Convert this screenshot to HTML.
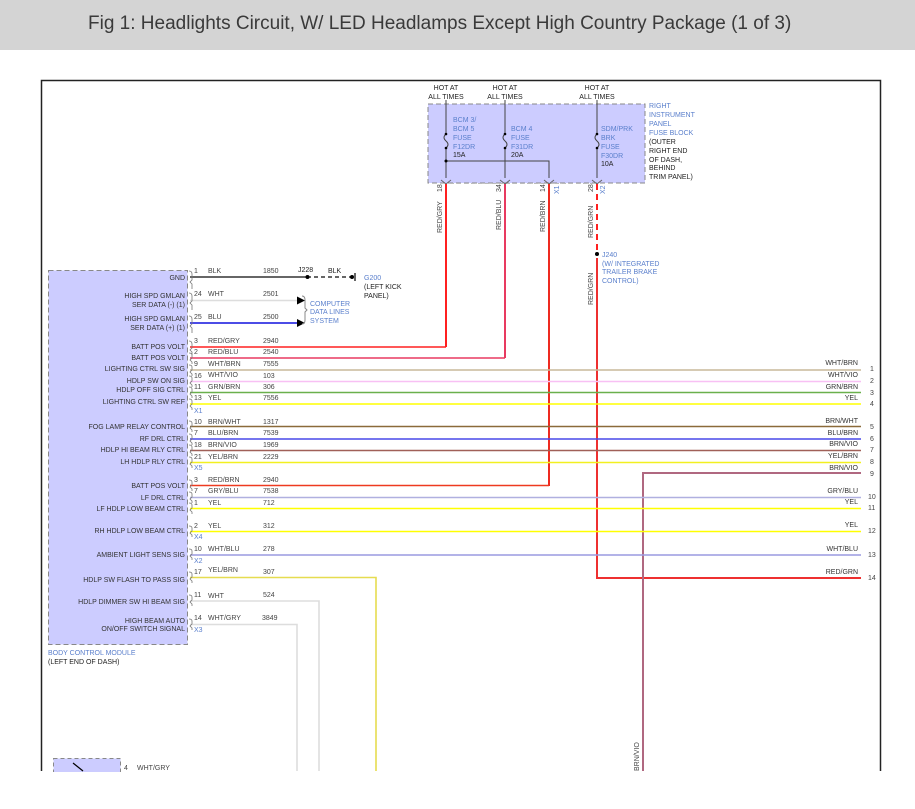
<!DOCTYPE html>
<html><head><meta charset="utf-8"><style>
html,body{margin:0;padding:0;background:#fff;width:915px;height:809px;overflow:hidden}
svg{display:block}
text{font-family:"Liberation Sans",Arial,sans-serif;font-size:7px;fill:#444}
.l{text-anchor:end;fill:#333}
.b{fill:#5a7fcc}
.k{fill:#222}
</style></head><body>
<svg width="915" height="809" viewBox="0 0 915 809" xmlns="http://www.w3.org/2000/svg">
<rect x="0" y="0" width="915" height="50" fill="#d4d4d4"/>
<text x="88" y="29" style="font-size:19px;fill:#3a3a3a">Fig 1: Headlights Circuit, W/ LED Headlamps Except High Country Package (1 of 3)</text>

<path d="M41.5 771V80.5H880.5V771" fill="none" stroke="#222" stroke-width="1.5"/>

<rect x="428" y="104" width="217" height="79" fill="#ccccff" stroke="#888" stroke-dasharray="5,3"/>
<g text-anchor="middle">
<text x="446" y="90" class="k">HOT AT</text><text x="446" y="99" class="k">ALL TIMES</text>
<text x="505" y="90" class="k">HOT AT</text><text x="505" y="99" class="k">ALL TIMES</text>
<text x="597" y="90" class="k">HOT AT</text><text x="597" y="99" class="k">ALL TIMES</text>
</g>
<g stroke="#444" fill="none" stroke-width="1">
<path d="M446 100V134M446 148V178"/><path d="M446 134q-4 3.5 0 7q4 3.5 0 7"/>
<path d="M505 100V134M505 148V178"/><path d="M505 134q-4 3.5 0 7q4 3.5 0 7"/>
<path d="M597 100V134M597 148V178"/><path d="M597 134q-4 3.5 0 7q4 3.5 0 7"/>
<path d="M446 161H549V178"/>
</g>
<g fill="#000"><circle cx="446" cy="134" r="1.3"/><circle cx="446" cy="148" r="1.3"/><circle cx="505" cy="134" r="1.3"/><circle cx="505" cy="148" r="1.3"/><circle cx="597" cy="134" r="1.3"/><circle cx="597" cy="148" r="1.3"/><circle cx="446" cy="161" r="1.5"/></g>
<text x="453" y="122" class="b">BCM 3/</text><text x="453" y="131" class="b">BCM 5</text><text x="453" y="140" class="b">FUSE</text><text x="453" y="149" class="b">F12DR</text><text x="453" y="157" class="k">15A</text>
<text x="511" y="131" class="b">BCM 4</text><text x="511" y="140" class="b">FUSE</text><text x="511" y="149" class="b">F31DR</text><text x="511" y="157" class="k">20A</text>
<text x="601" y="131" class="b">SDM/PRK</text><text x="601" y="140" class="b">BRK</text><text x="601" y="149" class="b">FUSE</text><text x="601" y="158" class="b">F30DR</text><text x="601" y="166" class="k">10A</text>
<text x="649" y="108" class="b">RIGHT</text><text x="649" y="117" class="b">INSTRUMENT</text><text x="649" y="126" class="b">PANEL</text><text x="649" y="135" class="b">FUSE BLOCK</text>
<text x="649" y="144" class="k">(OUTER</text><text x="649" y="153" class="k">RIGHT END</text><text x="649" y="162" class="k">OF DASH,</text><text x="649" y="170" class="k">BEHIND</text><text x="649" y="179" class="k">TRIM PANEL)</text>
<path d="M450 183.5H593" stroke="#bbb" stroke-dasharray="4,3"/>
<g stroke="#666" fill="none"><path d="M441 180l5 4l5-4M500 180l5 4l5-4M544 180l5 4l5-4M592 180l5 4l5-4"/></g>
<g transform="rotate(-90)">
<text x="-192" y="442">18</text><text x="-192" y="501">34</text><text x="-192" y="545">14</text><text x="-192" y="593">28</text>
<text x="-194" y="559" class="b">X1</text><text x="-194" y="605" class="b">X2</text>
<text x="-233" y="442">RED/GRY</text><text x="-230" y="501">RED/BLU</text><text x="-232" y="545">RED/BRN</text><text x="-238" y="593">RED/GRN</text>
<text x="-305" y="593">RED/GRN</text>
<text x="-771" y="639">BRN/VIO</text>
</g>

<g fill="none" stroke-width="2">
<path d="M446 184V347" stroke="#ff2020"/>
<path d="M505 184V358" stroke="#e83a60"/>
<path d="M549 184V486" stroke="#ee2a20"/>
<path d="M597 184V252" stroke="#ff2020" stroke-dasharray="6,4"/>
<path d="M597 258V578H861" stroke="#ee3030"/>
<path d="M643 771V473H861" stroke="#b06880"/>
</g>
<circle cx="597" cy="254" r="2" fill="#000"/>
<text x="602" y="257" class="b">J240</text><text x="602" y="266" class="b">(W/ INTEGRATED</text><text x="602" y="274" class="b">TRAILER BRAKE</text><text x="602" y="283" class="b">CONTROL)</text>

<rect x="48.5" y="270.5" width="139" height="374" fill="#ccccff" stroke="#888" stroke-dasharray="5,3"/>
<text x="48" y="655" class="b">BODY CONTROL MODULE</text>
<text x="48" y="664" class="k">(LEFT END OF DASH)</text>

<g fill="none" stroke-width="1.6">
<path d="M190 277H307" stroke="#333"/>
<path d="M307 277H352" stroke="#333" stroke-dasharray="4,3"/>
<path d="M190 300.5H297" stroke="#ddd"/>
<path d="M190 323H297" stroke="#1010dd"/>
<path d="M190 347H446" stroke="#ff2020"/>
<path d="M190 358H505" stroke="#e83a60"/>
<path d="M190 370H861" stroke="#c9b99a"/>
<path d="M190 381.5H861" stroke="#f8c0f4"/>
<path d="M190 392.5H861" stroke="#6ab04c"/>
<path d="M190 404H861" stroke="#ffff00"/>
<path d="M190 426.5H861" stroke="#8b6a3a"/>
<path d="M190 439H861" stroke="#4848e8"/>
<path d="M190 450.5H861" stroke="#a06058"/>
<path d="M190 462.5H861" stroke="#f2f020"/>
<path d="M190 485.5H549" stroke="#ee3a20"/>
<path d="M190 497.5H861" stroke="#b0b0e0"/>
<path d="M190 508.5H861" stroke="#ffff00"/>
<path d="M190 531.5H861" stroke="#ffff00"/>
<path d="M190 555H861" stroke="#9a9ae0"/>
<path d="M190 577.5H376V771" stroke="#e6dc50"/>
<path d="M190 601H319V771" stroke="#ddd"/>
<path d="M190 624.5H297V771" stroke="#ddd"/>
</g>
<circle cx="307.5" cy="277" r="2" fill="#000"/>
<circle cx="352" cy="277" r="2" fill="#000"/>
<path d="M355 273V281" stroke="#000" stroke-width="1.2"/>
<path d="M297 296.5l8 4l-8 4zM297 319l8 4l-8 4z" fill="#000"/>
<path d="M302 296q3 0 3 4v8l2 2l-2 2v8q0 4-3 4" fill="none" stroke="#888"/>
<text x="310" y="306" class="b">COMPUTER</text><text x="310" y="314" class="b">DATA LINES</text><text x="310" y="323" class="b">SYSTEM</text>
<text x="298" y="272" class="k">J228</text><text x="328" y="273" class="k">BLK</text>
<text x="364" y="280" class="b">G200</text><text x="364" y="289" class="k">(LEFT KICK</text><text x="364" y="298" class="k">PANEL)</text>

<g fill="none" stroke="#777" stroke-width="0.8">
<path d="M189 271q3 0 3 3v6l-2 2 2 2v5"/>
<path d="M189 293q3 0 3 3v5l-2 2 2 2v5"/>
<path d="M189 316q3 0 3 3v5l-2 2 2 2v5"/>
<path d="M189 341q3 0 3 3v4l-2 2 2 2v3"/><path d="M189 353q3 0 3 2v3l-2 2 2 2v2"/>
<path d="M189 365q3 0 3 2v3l-2 2 2 2v2"/><path d="M189 376q3 0 3 2v3l-2 2 2 2v2"/>
<path d="M189 387q3 0 3 2v3l-2 2 2 2v2"/><path d="M189 399q3 0 3 2v3l-2 2 2 2v2"/>
<path d="M189 421q3 0 3 2v3l-2 2 2 2v2"/><path d="M189 434q3 0 3 2v3l-2 2 2 2v2"/>
<path d="M189 445q3 0 3 2v3l-2 2 2 2v2"/><path d="M189 457q3 0 3 2v3l-2 2 2 2v2"/>
<path d="M189 480q3 0 3 2v3l-2 2 2 2v2"/><path d="M189 492q3 0 3 2v3l-2 2 2 2v2"/>
<path d="M189 503q3 0 3 2v3l-2 2 2 2v2"/><path d="M189 526q3 0 3 2v3l-2 2 2 2v2"/>
<path d="M189 549q3 0 3 2v3l-2 2 2 2v2"/><path d="M189 572q3 0 3 2v3l-2 2 2 2v2"/>
<path d="M189 595q3 0 3 2v3l-2 2 2 2v2"/><path d="M189 619q3 0 3 2v3l-2 2 2 2v2"/>
</g>

<g>
<text x="185" y="280" class="l">GND</text>
<text x="185" y="298" class="l">HIGH SPD GMLAN</text><text x="185" y="307" class="l">SER DATA (-) (1)</text>
<text x="185" y="321" class="l">HIGH SPD GMLAN</text><text x="185" y="330" class="l">SER DATA (+) (1)</text>
<text x="185" y="349" class="l">BATT POS VOLT</text>
<text x="185" y="360" class="l">BATT POS VOLT</text>
<text x="185" y="371" class="l">LIGHTING CTRL SW SIG</text>
<text x="185" y="383" class="l">HDLP SW ON SIG</text>
<text x="185" y="392" class="l">HDLP OFF SIG CTRL</text>
<text x="185" y="404" class="l">LIGHTING CTRL SW REF</text>
<text x="185" y="429" class="l">FOG LAMP RELAY CONTROL</text>
<text x="185" y="441" class="l">RF DRL CTRL</text>
<text x="185" y="452" class="l">HDLP HI BEAM RLY CTRL</text>
<text x="185" y="464" class="l">LH HDLP RLY CTRL</text>
<text x="185" y="488" class="l">BATT POS VOLT</text>
<text x="185" y="500" class="l">LF DRL CTRL</text>
<text x="185" y="511" class="l">LF HDLP LOW BEAM CTRL</text>
<text x="185" y="533" class="l">RH HDLP LOW BEAM CTRL</text>
<text x="185" y="557" class="l">AMBIENT LIGHT SENS SIG</text>
<text x="185" y="582" class="l">HDLP SW FLASH TO PASS SIG</text>
<text x="185" y="604" class="l">HDLP DIMMER SW HI BEAM SIG</text>
<text x="185" y="623" class="l">HIGH BEAM AUTO</text><text x="185" y="631" class="l">ON/OFF SWITCH SIGNAL</text>
</g>

<g>
<text x="194" y="273">1</text><text x="208" y="273">BLK</text><text x="263" y="273">1850</text>
<text x="194" y="296">24</text><text x="208" y="296">WHT</text><text x="263" y="296">2501</text>
<text x="194" y="319">25</text><text x="208" y="319">BLU</text><text x="263" y="319">2500</text>
<text x="194" y="343">3</text><text x="208" y="343">RED/GRY</text><text x="263" y="343">2940</text>
<text x="194" y="354">2</text><text x="208" y="354">RED/BLU</text><text x="263" y="354">2540</text>
<text x="194" y="366">9</text><text x="208" y="366">WHT/BRN</text><text x="263" y="366">7555</text>
<text x="194" y="378">16</text><text x="208" y="377">WHT/VIO</text><text x="263" y="378">103</text>
<text x="194" y="389">11</text><text x="208" y="389">GRN/BRN</text><text x="263" y="389">306</text>
<text x="194" y="400">13</text><text x="208" y="400">YEL</text><text x="263" y="400">7556</text>
<text x="194" y="413" class="b">X1</text>
<text x="194" y="424">10</text><text x="208" y="424">BRN/WHT</text><text x="263" y="424">1317</text>
<text x="194" y="435">7</text><text x="208" y="435">BLU/BRN</text><text x="263" y="435">7539</text>
<text x="194" y="447">18</text><text x="208" y="447">BRN/VIO</text><text x="263" y="447">1969</text>
<text x="194" y="459">21</text><text x="208" y="459">YEL/BRN</text><text x="263" y="459">2229</text>
<text x="194" y="470" class="b">X5</text>
<text x="194" y="482">3</text><text x="208" y="482">RED/BRN</text><text x="263" y="482">2940</text>
<text x="194" y="493">7</text><text x="208" y="493">GRY/BLU</text><text x="263" y="493">7538</text>
<text x="194" y="505">1</text><text x="208" y="505">YEL</text><text x="263" y="505">712</text>
<text x="194" y="528">2</text><text x="208" y="528">YEL</text><text x="263" y="528">312</text>
<text x="194" y="539" class="b">X4</text>
<text x="194" y="551">10</text><text x="208" y="551">WHT/BLU</text><text x="263" y="551">278</text>
<text x="194" y="563" class="b">X2</text>
<text x="194" y="574">17</text><text x="208" y="572">YEL/BRN</text><text x="263" y="574">307</text>
<text x="194" y="597">11</text><text x="208" y="598">WHT</text><text x="263" y="597">524</text>
<text x="194" y="620">14</text><text x="208" y="620">WHT/GRY</text><text x="262" y="620">3849</text>
<text x="194" y="632" class="b">X3</text>
</g>

<g>
<text x="858" y="365" class="l">WHT/BRN</text><text x="870" y="371">1</text>
<text x="858" y="377" class="l">WHT/VIO</text><text x="870" y="383">2</text>
<text x="858" y="389" class="l">GRN/BRN</text><text x="870" y="395">3</text>
<text x="858" y="400" class="l">YEL</text><text x="870" y="406">4</text>
<text x="858" y="423" class="l">BRN/WHT</text><text x="870" y="429">5</text>
<text x="858" y="435" class="l">BLU/BRN</text><text x="870" y="441">6</text>
<text x="858" y="446" class="l">BRN/VIO</text><text x="870" y="452">7</text>
<text x="858" y="458" class="l">YEL/BRN</text><text x="870" y="464">8</text>
<text x="858" y="470" class="l">BRN/VIO</text><text x="870" y="476">9</text>
<text x="858" y="493" class="l">GRY/BLU</text><text x="868" y="499">10</text>
<text x="858" y="504" class="l">YEL</text><text x="868" y="510">11</text>
<text x="858" y="527" class="l">YEL</text><text x="868" y="533">12</text>
<text x="858" y="551" class="l">WHT/BLU</text><text x="868" y="557">13</text>
<text x="858" y="574" class="l">RED/GRN</text><text x="868" y="580">14</text>
</g>

<rect x="53.5" y="758.5" width="67" height="14" fill="#ccccff" stroke="#888" stroke-dasharray="4,3"/>
<path d="M73 763l10 8" stroke="#000" stroke-width="1.2"/>
<text x="124" y="770">4</text><text x="137" y="770">WHT/GRY</text>
<rect x="0" y="772" width="915" height="37" fill="#fff"/>
</svg>
</body></html>
